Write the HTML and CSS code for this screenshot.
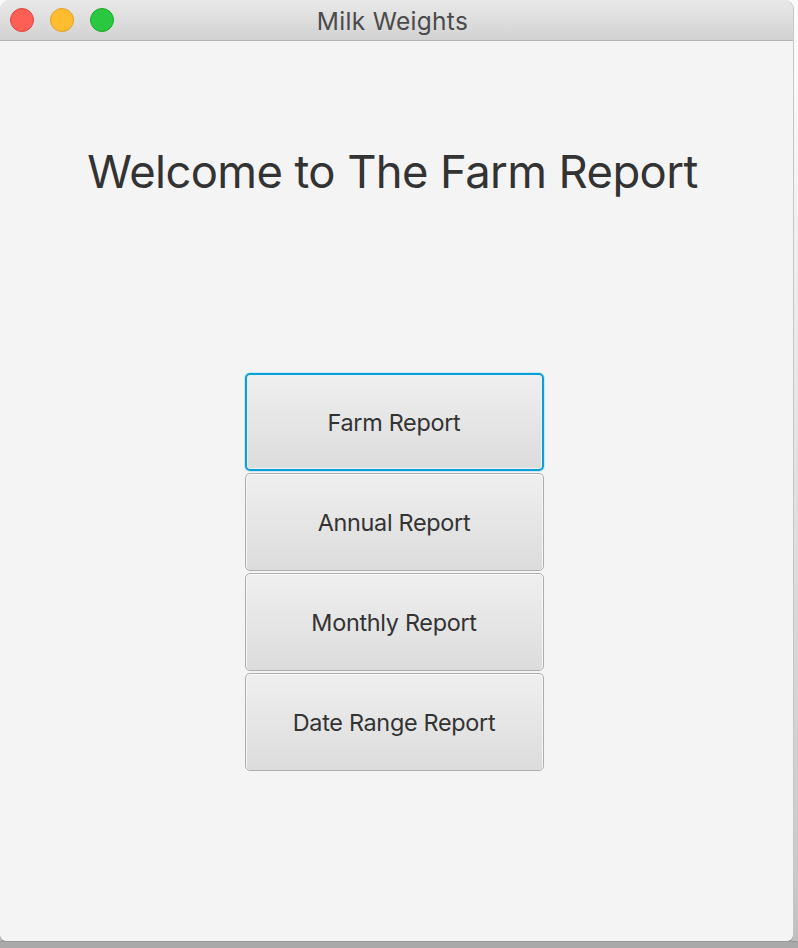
FILE: index.html
```html
<!DOCTYPE html>
<html>
<head>
<meta charset="utf-8">
<link rel="stylesheet" href="styles.css">
</head>
<body>
<div class="desktop">
  <div class="window">
    <div class="titlebar">
      <div class="lights">
        <span class="light red"></span>
        <span class="light yellow"></span>
        <span class="light green"></span>
      </div>
      <div class="title">Milk Weights</div>
    </div>
    <div class="content">
      <h1 class="heading">Welcome to The Farm Report</h1>
      <div class="buttons">
        <button class="btn focused">Farm Report</button>
        <button class="btn">Annual Report</button>
        <button class="btn">Monthly Report</button>
        <button class="btn">Date Range Report</button>
      </div>
    </div>
  </div>
  <div class="dock"></div>
</div>
</body>
</html>
```
FILE: styles.css
```css
html, body {
  margin: 0;
  padding: 0;
  width: 798px;
  height: 948px;
  overflow: hidden;
  background: #f6f6f6;
  font-family: Inter, "Noto Sans", sans-serif;
}
.desktop {
  width: 798px;
  height: 948px;
  display: flex;
  flex-direction: column;
  background: linear-gradient(to bottom, #fafafa 0, #fafafa 60px, #c9c9c9 880px, #bdbdbd 100%);
}
.window {
  width: 793px;
  height: 941px;
  display: flex;
  flex-direction: column;
  border-radius: 9px 9px 6px 6px;
  overflow: hidden;
  background: #f4f4f4;
  box-shadow: 0 1px 0 #8c8c8c, 1px 0 0 #c6c6c6;
}
.dock {
  flex: 1;
  background: #a9a9a9;
  border-top: 1px solid #9a9a9a;
}
.titlebar {
  height: 40px;
  flex: none;
  position: relative;
  display: flex;
  align-items: center;
  justify-content: center;
  background: linear-gradient(to bottom, #e9e9e9, #d2d2d2);
  border-bottom: 1px solid #b3b3b3;
}
.lights {
  position: absolute;
  left: 10px;
  top: 8px;
  display: flex;
  gap: 16px;
}
.light {
  width: 24px;
  height: 24px;
  border-radius: 50%;
  box-sizing: border-box;
}
.red { background: #fd5f57; border: 1px solid #e0443e; }
.yellow { background: #febc2e; border: 1px solid #dea123; }
.green { background: #2ac840; border: 1px solid #1aab29; }
.title {
  font-size: 24.5px;
  letter-spacing: 0.3px;
  color: #4b4b4b;
  margin-left: -8px;
  margin-top: 1px;
}
.content {
  flex: 1;
  display: flex;
  flex-direction: column;
  align-items: center;
}
.heading {
  margin: 99px 0 0 0;
  font-size: 45.4px;
  font-weight: 400;
  color: #333333;
  line-height: 64px;
  letter-spacing: -0.6px;
  margin-left: -8px;
}
.buttons {
  margin-top: 169px;
  display: flex;
  flex-direction: column;
  gap: 2px;
  margin-left: -5px;
}
.btn {
  width: 299px;
  height: 98px;
  box-sizing: border-box;
  border: 1.5px solid #adadad;
  border-radius: 5px;
  background: linear-gradient(to bottom, #efefef, #dcdcdc);
  box-shadow: inset 0 1px 0 #fbfbfb, inset 1px 0 0 #f6f6f6, inset -1px 0 0 #f6f6f6;
  font-family: Inter, "Noto Sans", sans-serif;
  font-size: 23.4px;
  color: #333333;
  padding: 0;
  letter-spacing: -0.3px;
}
.btn.focused {
  border: 2px solid #0b9fd6;
  box-shadow: 0 0 0 1px #cbe7f3, inset 0 0 0 1px #e8f1f5;
}
```
